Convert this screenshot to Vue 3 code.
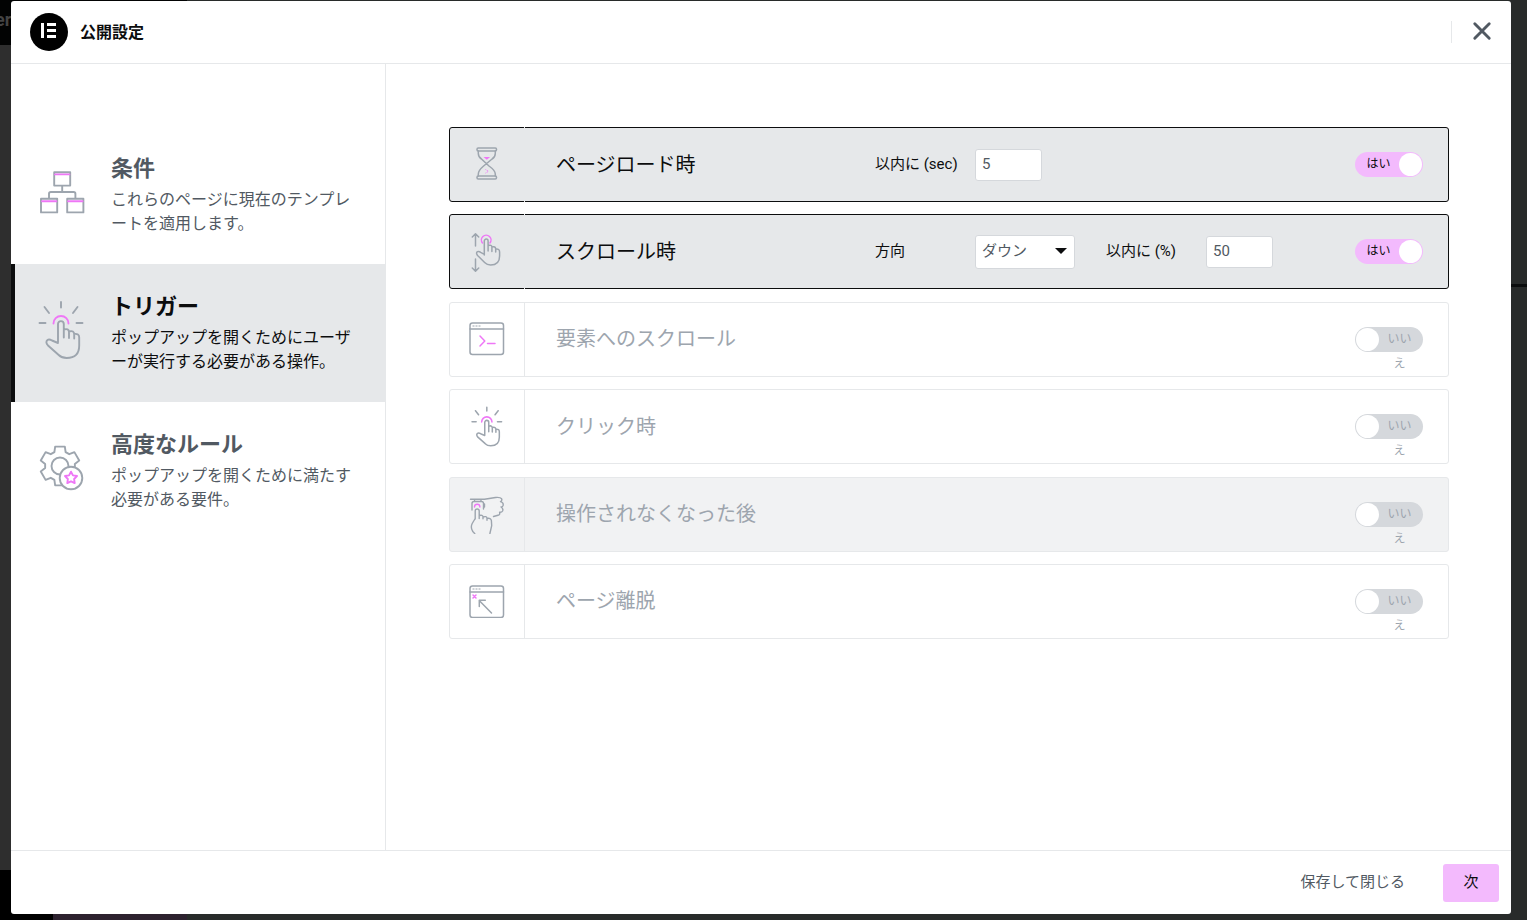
<script setup>
import { ref } from 'vue'

const steps = [
  { id: 'conditions', title: '条件', text: 'これらのページに現在のテンプレートを適用します。' },
  { id: 'triggers', title: 'トリガー', text: 'ポップアップを開くためにユーザーが実行する必要がある操作。' },
  { id: 'rules', title: '高度なルール', text: 'ポップアップを開くために満たす必要がある要件。' }
]
const current = ref('triggers')

const triggers = ref([
  { id: 'load', title: 'ページロード時', on: true, fields: [{ id: 'load-sec', label: '以内に (sec)', value: '5' }] },
  {
    id: 'scroll',
    title: 'スクロール時',
    on: true,
    fields: [
      { id: 'scroll-dir', label: '方向', value: 'ダウン', options: ['ダウン', 'アップ'] },
      { id: 'scroll-pct', label: '以内に (%)', value: '50' }
    ]
  },
  { id: 'element', title: '要素へのスクロール', on: false, fields: [] },
  { id: 'click', title: 'クリック時', on: false, fields: [] },
  { id: 'idle', title: '操作されなくなった後', on: false, fields: [] },
  { id: 'exit', title: 'ページ離脱', on: false, fields: [] }
])

function polar(cx, cy, r, deg) {
  const a = (deg * Math.PI) / 180
  return `${(cx + r * Math.cos(a)).toFixed(2)} ${(cy + r * Math.sin(a)).toFixed(2)}`
}

const gear = 'M' + [0, 1, 2, 3, 4, 5].flatMap((k) => {
  const a = k * 60 - 90
  return [polar(59, 465, 15, a - 22), polar(59, 465, 20, a - 14), polar(59, 465, 20, a + 14), polar(59, 465, 15, a + 22)]
}).join('L') + 'Z'

const star = 'M' + Array.from({ length: 10 }, (_, k) => polar(70, 477, k % 2 ? 3.3 : 6.3, k * 36 - 90)).join('L') + 'Z'
</script>

<template>
  <div class="screen">
    <div class="backdrop" aria-hidden="true">
      <div class="panel">
        <div class="panel-head">er</div>
        <div class="panel-body"></div>
        <div class="panel-foot"></div>
      </div>
      <div class="canvas"><div class="canvas-line"></div></div>
    </div>

    <div class="modal" role="dialog" aria-labelledby="dialog-title">
      <header class="head">
        <svg class="logo" viewBox="0 0 38 38" aria-hidden="true">
          <circle cx="19" cy="19" r="19" fill="#000" />
          <path d="M11 10h3v15h-3zM17 10h9v3h-9zM17 16h9v3h-9zM17 22h9v3h-9z" fill="#fff" />
        </svg>
        <h1 id="dialog-title">公開設定</h1>
        <button class="close" type="button" aria-label="閉じる">
          <svg viewBox="0 0 18 18" aria-hidden="true"><path d="M2.500 2.500l13 13M15.500 2.500l-13 13" /></svg>
        </button>
      </header>

      <div class="content">
        <nav class="side">
          <button
            v-for="s in steps"
            :key="s.id"
            type="button"
            class="step"
            :class="{ active: s.id === current }"
            @click="current = s.id"
          >
            <span class="step-icon">
              <svg v-if="s.id === 'conditions'" class="art" width="46" height="44" viewBox="39 170 46 44">
                <path d="M54.2 172.2h16v13.4h-16zM41 198.8h16.2v13.6H41zM67.2 198.8h16.2v13.6H67.2zM62.2 185.6v6.4M49 198.8v-5q0-1.8 1.8-1.8h22.8q1.800 0 1.800 1.800v5" />
                <path class="pink" d="M55 174.400h14.400M42 201.200h14.400M68 201.200h14.600" />
              </svg>
              <svg v-else-if="s.id === 'triggers'" class="art" width="48" height="60" viewBox="38 299 48 60">
                <path d="M61 301v5.500M44.500 306l4.500 6M77.500 306l-4.500 6M39.500 322h6M76.500 322h6" />
                <path class="pink" d="M53.500 322.500a7.500 7.500 0 0 1 15 0" />
                <path d="M58 341v-18a2.900 2.900 0 0 1 5.800 0v13.500M63.800 328.500q5-1.500 5.200 2.500v6M69 330.500q5.200-1.500 5.200 3v4M74.200 333q5-.7 5 3.500v8q0 12.500-12.500 12.500-5 0-8-3L48 344.500q-3-3.500-.5-5.500 1.600-1.200 4.500.5l6 2.500" />
              </svg>
              <svg v-else class="art" width="46" height="46" viewBox="38 444 46 46">
                <path :d="gear" />
                <circle cx="59" cy="465" r="8.500" />
                <circle cx="70" cy="477" r="11.300" fill="#fff" />
                <path class="pink" :d="star" />
              </svg>
            </span>
            <span class="step-copy">
              <span class="step-title">{{ s.title }}</span>
              <span class="step-text">{{ s.text }}</span>
            </span>
          </button>
        </nav>

        <main class="main">
          <div class="rows">
            <section v-for="t in triggers" :key="t.id" class="row" :class="{ on: t.on, hover: t.id === 'idle' }">
              <div class="row-icon">
                <svg v-if="t.id === 'load'" class="art" width="22" height="36" viewBox="476 147 22 36">
                  <rect x="477" y="148" width="19.500" height="3" rx="1.200" />
                  <rect x="477" y="176" width="19.500" height="3" rx="1.200" />
                  <path d="M478.300 151v2.500q0 3.500 3.200 5.500l7.500 7q6.300 4.500 6.300 8v2M495.300 151v2.500q0 3.500-3.200 5.500l-8.500 7q-5.300 4.500-5.300 8v2" />
                  <path class="pink-fill" d="M483.500 157h6.600l-3.300 2.800z" />
                  <path class="pink dotted" d="M485.500 169.500l3 1.800-3 1.800" />
                </svg>
                <svg v-else-if="t.id === 'scroll'" class="art" width="32" height="44" viewBox="472 230 32 44">
                  <path d="M476.500 246v-12M473.300 237l3.200-3.300 3.200 3.300M476.500 259v12M473.300 268l3.200 3.300 3.200-3.300" />
                  <path class="pink" d="M483.500 243a4.800 4.800 0 1 1 7.400 0" />
                  <path d="M485.300 255v-14a1.900 1.900 0 0 1 3.800 0v10M489.100 245.500q3.600-1 3.800 1.500v4.500M492.900 247q3.700-1 3.800 2v3M496.700 249q3.900-.5 3.900 3v4q0 9-9 9-3.500 0-6-2.500l-7-7q-2-2.500-.2-3.800 1.500-.8 3.300.6l3.600 2" />
                </svg>
                <svg v-else-if="t.id === 'click'" class="art bold" width="33" height="43" viewBox="38 299 48 60">
                  <path d="M61 301v5.500M44.500 306l4.500 6M77.500 306l-4.500 6M39.500 322h6M76.500 322h6" />
                  <path class="pink" d="M53.500 322.500a7.500 7.500 0 0 1 15 0" />
                  <path d="M58 341v-18a2.900 2.900 0 0 1 5.800 0v13.500M63.800 328.500q5-1.500 5.200 2.500v6M69 330.500q5.200-1.500 5.200 3v4M74.200 333q5-.7 5 3.500v8q0 12.500-12.500 12.500-5 0-8-3L48 344.500q-3-3.500-.5-5.500 1.600-1.200 4.500.5l6 2.500" />
                </svg>
                <svg v-else-if="t.id === 'idle'" class="art thin" width="36" height="40" viewBox="469 494 36 40">
                  <path d="M470.500 499.300h14l11-1.800q5-.4 6 1.200t-1 3q3.400 1 2.500 4-.6 1.200-2 1.300 2.600 1.400 1.600 4-.8 1.500-3 1.300.6 2.500-1.600 3l-4.500 1.200M474.500 499.500v2h6.500v-2M472 510v-6.500q0-2 2-2h7.500q2 0 2 2v5.500M484.500 504v3" />
                  <path class="pink" d="M474.500 507a2.700 2.700 0 0 1 5.400 0" />
                  <path d="M475.200 519v-8a2 2 0 0 1 4 0v7.500M479.200 515.500q3.500-.8 3.800 1.200v2M483 517q3.600-1.200 4 1.200v2M487 518.500q3.800-1 4.400 2.200l.3 5-1.800 7.800M475.200 518.500l-3 5q-2 4 .6 8l2 2.200" />
                </svg>
                <svg v-else class="art" width="36" height="34" :viewBox="t.id === 'exit' ? '469 321.5 36 34' : '469 322.5 36 34'">
                  <rect x="470" y="323.500" width="33.500" height="31.500" rx="2.500" />
                  <path d="M470 329.500h33.500" />
                  <path class="dots" d="M472.500 326.500h8" />
                  <path v-if="t.id === 'element'" class="pink" d="M480 336.500l4.800 5-4.800 5M487.500 344h7.500" />
                  <template v-else>
                    <path class="pink" d="M473 332.500l3 3M476 332.500l-3 3" />
                    <path d="M491.500 350.500l-12.300-12.500M479.300 344v-6.200h6" />
                  </template>
                </svg>
              </div>

              <div class="row-body">
                <h2>{{ t.title }}</h2>
                <div class="fields">
                  <div v-for="f in t.fields" :key="f.id" class="field">
                    <label :for="f.id">{{ f.label }}</label>
                    <span v-if="f.options" class="select">
                      <select :id="f.id" v-model="f.value">
                        <option v-for="o in f.options" :key="o">{{ o }}</option>
                      </select>
                    </span>
                    <input v-else :id="f.id" v-model="f.value" type="text" />
                  </div>
                </div>
                <label class="switch">
                  <input v-model="t.on" type="checkbox" :aria-label="t.title" />
                  <span class="track">
                    <span class="knob"></span>
                    <span class="word">{{ t.on ? 'はい' : 'いいえ' }}</span>
                  </span>
                </label>
              </div>
            </section>
          </div>
        </main>
      </div>

      <footer class="foot">
        <button type="button" class="save">保存して閉じる</button>
        <button type="button" class="next">次</button>
      </footer>
    </div>
  </div>
</template>

<style>
body {
  background: #282b2a;
}
</style>

<style scoped>
* {
  box-sizing: border-box;
}

.screen {
  position: relative;
  display: flex;
  min-height: 100vh;
  padding: 1px 16px 6px 11px;
  font-family: Roboto, "Noto Sans CJK JP", sans-serif;
  color: #515962;
}

button,
input,
select {
  font: inherit;
  color: inherit;
}

button {
  border: 0;
  padding: 0;
  background: none;
  cursor: pointer;
}

.backdrop {
  position: absolute;
  inset: 0;
  display: flex;
  overflow: hidden;
  background: #282b2a;
}

.panel {
  display: flex;
  flex-direction: column;
  width: 187px;
  background: #2e2e2e;
}

.panel-head {
  height: 45px;
  background: #020303;
  color: #444;
  font-size: 18px;
  font-weight: 700;
  line-height: 40px;
  text-indent: -5px;
}

.panel-body {
  flex: 1;
}

.panel-foot {
  height: 50px;
  border-left: 53px solid #000;
  background: #2d222f;
}

.canvas {
  flex: 1;
  padding-top: 284px;
}

.canvas-line {
  height: 3px;
  background: #0b0d0d;
}

.modal {
  position: relative;
  display: flex;
  flex: 1;
  flex-direction: column;
  overflow: hidden;
  border-radius: 3px;
  background: #fff;
}

.head {
  display: flex;
  align-items: center;
  height: 63px;
  padding: 0 19px;
  border-bottom: 1px solid #e6e8ea;
}

.logo {
  width: 38px;
  height: 38px;
}

h1 {
  flex: 1;
  margin: 0 0 0 12px;
  padding-bottom: 2px;
  color: #0c0d0e;
  font-size: 16px;
  font-weight: 700;
}

.close {
  display: flex;
  align-items: center;
  height: 22px;
  padding: 0 0 2px 20px;
  border-left: 1px solid #e6e8ea;
}

.close svg {
  width: 20px;
  height: 20px;
  fill: none;
  stroke: #515962;
  stroke-width: 2.6;
  stroke-linecap: round;
}

.content {
  display: flex;
  flex: 1;
}

.side {
  width: 375px;
  padding-top: 62px;
  border-right: 1px solid #e6e8ea;
}

.step {
  display: flex;
  align-items: center;
  width: 100%;
  height: 138px;
  padding-right: 24px;
  border-left: 4px solid transparent;
  text-align: left;
}

.step.active {
  border-left-color: #0c0d0e;
  background: #e6e8ea;
  color: #0c0d0e;
}

.step-icon {
  display: flex;
  justify-content: center;
  width: 96px;
  flex: none;
  padding: 0 2px 7px 0;
}

.step-copy {
  flex: 1;
  min-width: 0;
}

.step-title {
  display: block;
  margin-bottom: 5px;
  font-size: 22px;
  font-weight: 700;
  line-height: 28px;
}

.step-text {
  display: block;
  font-size: 16px;
  line-height: 24px;
}

.art {
  fill: none;
  stroke: #9da5ae;
  stroke-width: 1.9;
  stroke-linecap: round;
  stroke-linejoin: round;
}

.art.bold {
  stroke-width: 2.2;
}

.art.thin {
  stroke-width: 1.4;
}

.row .art:not(.bold):not(.thin) {
  stroke-width: 1.5;
}

.art .pink {
  stroke: #ee77f6;
}

.art .pink-fill {
  fill: #ee77f6;
  stroke: none;
}

.art .dotted {
  stroke-width: 1;
  stroke-dasharray: 1 1;
  stroke-linecap: butt;
}

.art .dots {
  stroke-width: 1;
  stroke-dasharray: 2 1;
  stroke-linecap: butt;
}

.main {
  flex: 1;
  padding: 63px 62px 63px 63px;
}

.rows {
  display: grid;
  align-content: space-between;
  min-height: 512px;
}

.row {
  display: flex;
  height: 75px;
  border: 1px solid #e6e8ea;
  border-radius: 3px;
  color: #9da5ae;
}

.row.on {
  border-color: #0c0d0e;
  background: #e6e8ea;
  color: #0c0d0e;
}

.row.hover {
  background: #f1f2f3;
}

.row-icon {
  display: flex;
  align-items: center;
  justify-content: center;
  width: 75px;
  margin: -1px 0;
  border-right: 1px solid #e6e8ea;
}

.row-body {
  display: flex;
  flex: 1;
  align-items: center;
  padding: 0 25px 0 31px;
}

h2 {
  width: 319px;
  margin: 0;
  font-size: 20px;
  font-weight: 400;
  line-height: 30px;
}

.fields {
  display: flex;
  flex: 1;
  gap: 31px;
  font-size: 15px;
}

.field {
  display: flex;
  align-items: center;
}

.field label {
  width: 100px;
  padding-bottom: 4px;
}

.field input,
.field select {
  height: 32px;
  padding: 0 6px 2px;
  border: 1px solid #d5d8dc;
  border-radius: 3px;
  background: #fff;
  color: #515962;
}

.field input {
  width: 67px;
}

.select {
  position: relative;
  display: flex;
}

.field select {
  width: 100px;
  height: 34px;
  appearance: none;
}

.select::after {
  content: "";
  position: absolute;
  top: 13px;
  right: 8px;
  border: 6px solid transparent;
  border-top-color: #0c0d0e;
  border-bottom: 0;
  pointer-events: none;
}

.switch {
  position: relative;
  width: 68px;
  height: 25px;
  font-size: 12px;
  cursor: pointer;
}

.switch input {
  position: absolute;
  inset: 0;
  margin: 0;
  opacity: 0;
}

.track {
  display: flex;
  height: 25px;
  padding: 1px;
  border-radius: 13px;
  background: #d5d8dc;
}

.knob {
  width: 23px;
  height: 23px;
  flex: none;
  border-radius: 50%;
  background: #fff;
}

.word {
  flex: 1;
  margin-top: -1px;
  padding: 0 9px 0 7px;
  line-height: 25px;
  text-align: center;
}

.on .track {
  flex-direction: row-reverse;
  background: #f3bafd;
}

.on .word {
  padding: 0 7px 0 9px;
}

.foot {
  display: flex;
  align-items: center;
  justify-content: flex-end;
  gap: 38px;
  height: 64px;
  padding-right: 12px;
  border-top: 1px solid #e6e8ea;
  font-size: 15px;
}

.save,
.next {
  height: 38px;
  padding-bottom: 4px;
}

.next {
  width: 56px;
  border-radius: 3px;
  background: #f3bafd;
  color: #0c0d0e;
}
</style>
